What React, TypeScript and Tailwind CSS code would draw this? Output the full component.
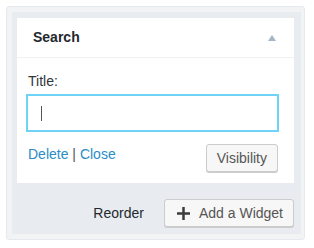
export default function App() {
  return (
    <div
      className="w-[314px] h-[248px] bg-white pt-[6px] pl-[6px]"
      style={{ fontFamily: '"Liberation Sans", Arial, sans-serif' }}
    >
      <div className="w-[299px] h-[234px] border border-[#e6eaee] bg-[#f1f3f5] rounded-[3px] pt-[5px] pl-[5px] pr-[3px] pb-[5px]">
        <div className="h-full bg-[#e8ecf0] pt-[6px] pl-[5px] pr-[7px]">
          <div className="bg-white">
            <div className="h-[40px] flex items-center justify-between pl-[16px] pr-[18px] border-b border-[#eef0f2]">
              <span className="text-[14px] font-bold text-[#23282d]">Search</span>
              <svg width="8" height="6" viewBox="0 0 8 6">
                <path d="M4 0 L8 6 L0 6 Z" fill="#a3b5c7" />
              </svg>
            </div>
            <div className="pl-[9px] pr-[15px] pt-[15px] pb-[11px]">
              <div className="text-[14px] text-[#32373c] leading-[16px] pl-[2px]">Title:</div>
              <div className="mt-[5px] h-[38px] border-2 border-[#6fd3f7] flex items-center pl-[13px]">
                <span className="w-px h-[15px] bg-[#555]" />
              </div>
              <div className="mt-[12px] flex items-start justify-between pl-[2px]">
                <div className="text-[14px] text-[#2a8dc5] leading-[18px] mt-[1px]">
                  <span>Delete</span>
                  <span className="text-[#555]"> | </span>
                  <span>Close</span>
                </div>
                <button className="h-[28px] px-[10px] text-[14px] text-[#555] bg-[#f7f7f7] border border-[#ccc] rounded-[3px] shadow-[0_1px_0_#ccc] mr-[1px]">
                  Visibility
                </button>
              </div>
            </div>
          </div>
          <div className="flex items-center justify-end gap-[20px] mt-[16px]">
            <span className="text-[14px] text-[#23282d]">Reorder</span>
            <button className="h-[28px] flex items-center gap-[9px] pl-[12px] pr-[10px] text-[14px] text-[#555] bg-[#f7f7f7] border border-[#ccc] rounded-[3px] shadow-[0_1px_0_#ccc]">
              <svg width="13" height="13" viewBox="0 0 13 13">
                <path d="M5.25 0 H7.75 V5.25 H13 V7.75 H7.75 V13 H5.25 V7.75 H0 V5.25 H5.25 Z" fill="#3c3c3c" />
              </svg>
              <span>Add a Widget</span>
            </button>
          </div>
        </div>
      </div>
    </div>
  );
}
